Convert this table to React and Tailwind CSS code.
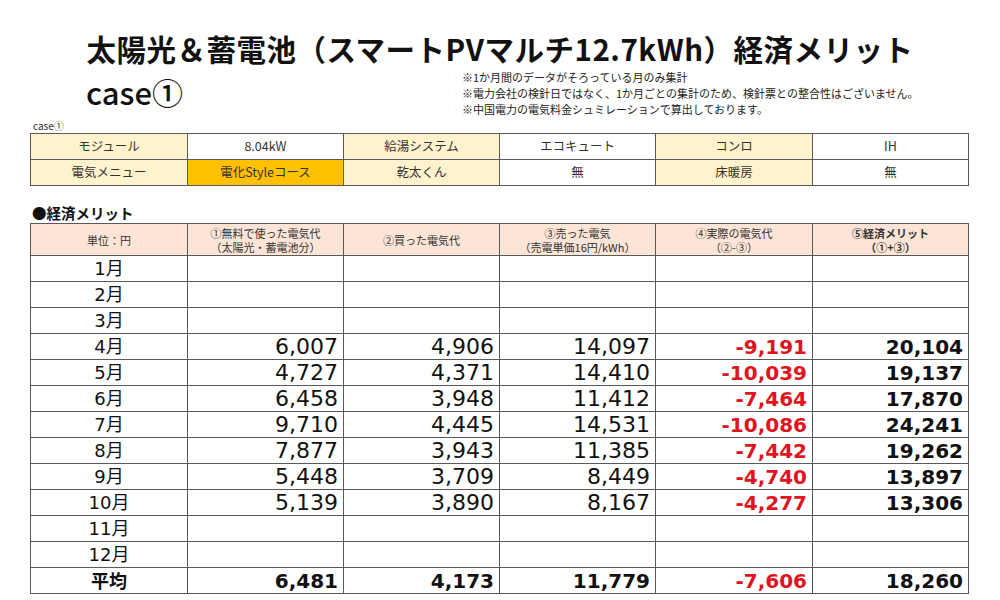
import React from "react";

const JP = { fontFamily: '"Noto Sans CJK JP", sans-serif' };
const NUM = { fontFamily: '"DejaVu Sans", "Noto Sans CJK JP", sans-serif' };

const cols = "grid grid-cols-[157px_156px_156px_156px_157px_156px]";
const cell = "border-r border-b border-[#5a5a5a] flex items-center";

const rows = [
  ["1月"],
  ["2月"],
  ["3月"],
  ["4月", "6,007", "4,906", "14,097", "-9,191", "20,104"],
  ["5月", "4,727", "4,371", "14,410", "-10,039", "19,137"],
  ["6月", "6,458", "3,948", "11,412", "-7,464", "17,870"],
  ["7月", "9,710", "4,445", "14,531", "-10,086", "24,241"],
  ["8月", "7,877", "3,943", "11,385", "-7,442", "19,262"],
  ["9月", "5,448", "3,709", "8,449", "-4,740", "13,897"],
  ["10月", "5,139", "3,890", "8,167", "-4,277", "13,306"],
  ["11月"],
  ["12月"],
];

function InfoCell({ children, bg }) {
  return (
    <div className={`${cell} justify-center h-[26px] text-[12.5px] text-[#333] ${bg}`} style={JP}>
      {children}
    </div>
  );
}

function DataRow({ r, avg }) {
  const vals = r.slice(1);
  return (
    <>
      <div
        className={`${cell} justify-center h-[26px] text-[18px] text-[#111] ${avg ? "font-bold" : ""}`}
        style={avg ? JP : NUM}
      >
        {r[0]}
      </div>
      {[0, 1, 2, 3, 4].map((i) => {
        const v = vals[i];
        const bold = avg || i >= 3;
        const red = i === 3;
        return (
          <div
            key={i}
            className={`${cell} justify-end pr-[5px] h-[26px] ${bold ? "font-bold text-[20px]" : "text-[22px]"} ${red ? "text-[#e0141e]" : "text-[#111]"}`}
            style={NUM}
          >
            {v || ""}
          </div>
        );
      })}
    </>
  );
}

export default function App() {
  return (
    <div className="w-[1000px] h-[600px] bg-white overflow-hidden pt-[30px]" style={JP}>
      <div className="h-[36px] leading-[36px] text-center text-[29.5px] tracking-[0.5px] font-bold text-[#111] whitespace-nowrap">
        太陽光＆蓄電池（スマートPVマルチ12.7kWh）経済メリット
      </div>
      <div className="flex h-[50px] mt-[3px]">
        <div className="w-[462px] pl-[86px] pt-[5px] text-[31px] font-medium leading-[36px] text-[#111]">
          case①
        </div>
        <div className="text-[11px] leading-[16px] text-[#222]">
          <div>※1か月間のデータがそろっている月のみ集計</div>
          <div>※電力会社の検針日ではなく、1か月ごとの集計のため、検針票との整合性はございません。</div>
          <div>※中国電力の電気料金シュミレーションで算出しております。</div>
        </div>
      </div>
      <div className="pl-[33px] text-[10px] leading-[14px] text-[#333]">case①</div>
      <div className={`ml-[30px] w-[939px] border-l border-t border-[#5a5a5a] ${cols}`}>
        <InfoCell bg="bg-[#fff2cc]">モジュール</InfoCell>
        <InfoCell bg="bg-white">8.04kW</InfoCell>
        <InfoCell bg="bg-[#fff2cc]">給湯システム</InfoCell>
        <InfoCell bg="bg-white">エコキュート</InfoCell>
        <InfoCell bg="bg-[#fff2cc]">コンロ</InfoCell>
        <InfoCell bg="bg-white">IH</InfoCell>
        <InfoCell bg="bg-[#fff2cc]">電気メニュー</InfoCell>
        <InfoCell bg="bg-[#ffc000]">電化Styleコース</InfoCell>
        <InfoCell bg="bg-[#fff2cc]">乾太くん</InfoCell>
        <InfoCell bg="bg-white">無</InfoCell>
        <InfoCell bg="bg-[#fff2cc]">床暖房</InfoCell>
        <InfoCell bg="bg-white">無</InfoCell>
      </div>
      <div className="mt-[16px] pl-[32px] h-[21px] leading-[21px] text-[14.5px] font-bold text-[#111]">
        ●経済メリット
      </div>
      <div className={`ml-[30px] w-[939px] border-l border-t border-[#5a5a5a] ${cols}`}>
        {[
          ["単位：円"],
          ["①無料で使った電気代", "（太陽光・蓄電池分）"],
          ["②買った電気代"],
          ["③売った電気", "（売電単価16円/kWh）"],
          ["④実際の電気代", "（②-③）"],
          ["⑤経済メリット", "（①+③）"],
        ].map((h, i) => (
          <div
            key={i}
            className={`${cell} flex-col justify-center h-[32px] bg-[#fce4d6] text-[11px] leading-[14px] text-[#333] ${i === 5 ? "font-bold" : ""}`}
          >
            {h.map((t, j) => (
              <div key={j}>{t}</div>
            ))}
          </div>
        ))}
        {rows.map((r, i) => (
          <DataRow key={i} r={r} />
        ))}
        <DataRow r={["平均", "6,481", "4,173", "11,779", "-7,606", "18,260"]} avg />
      </div>
    </div>
  );
}
